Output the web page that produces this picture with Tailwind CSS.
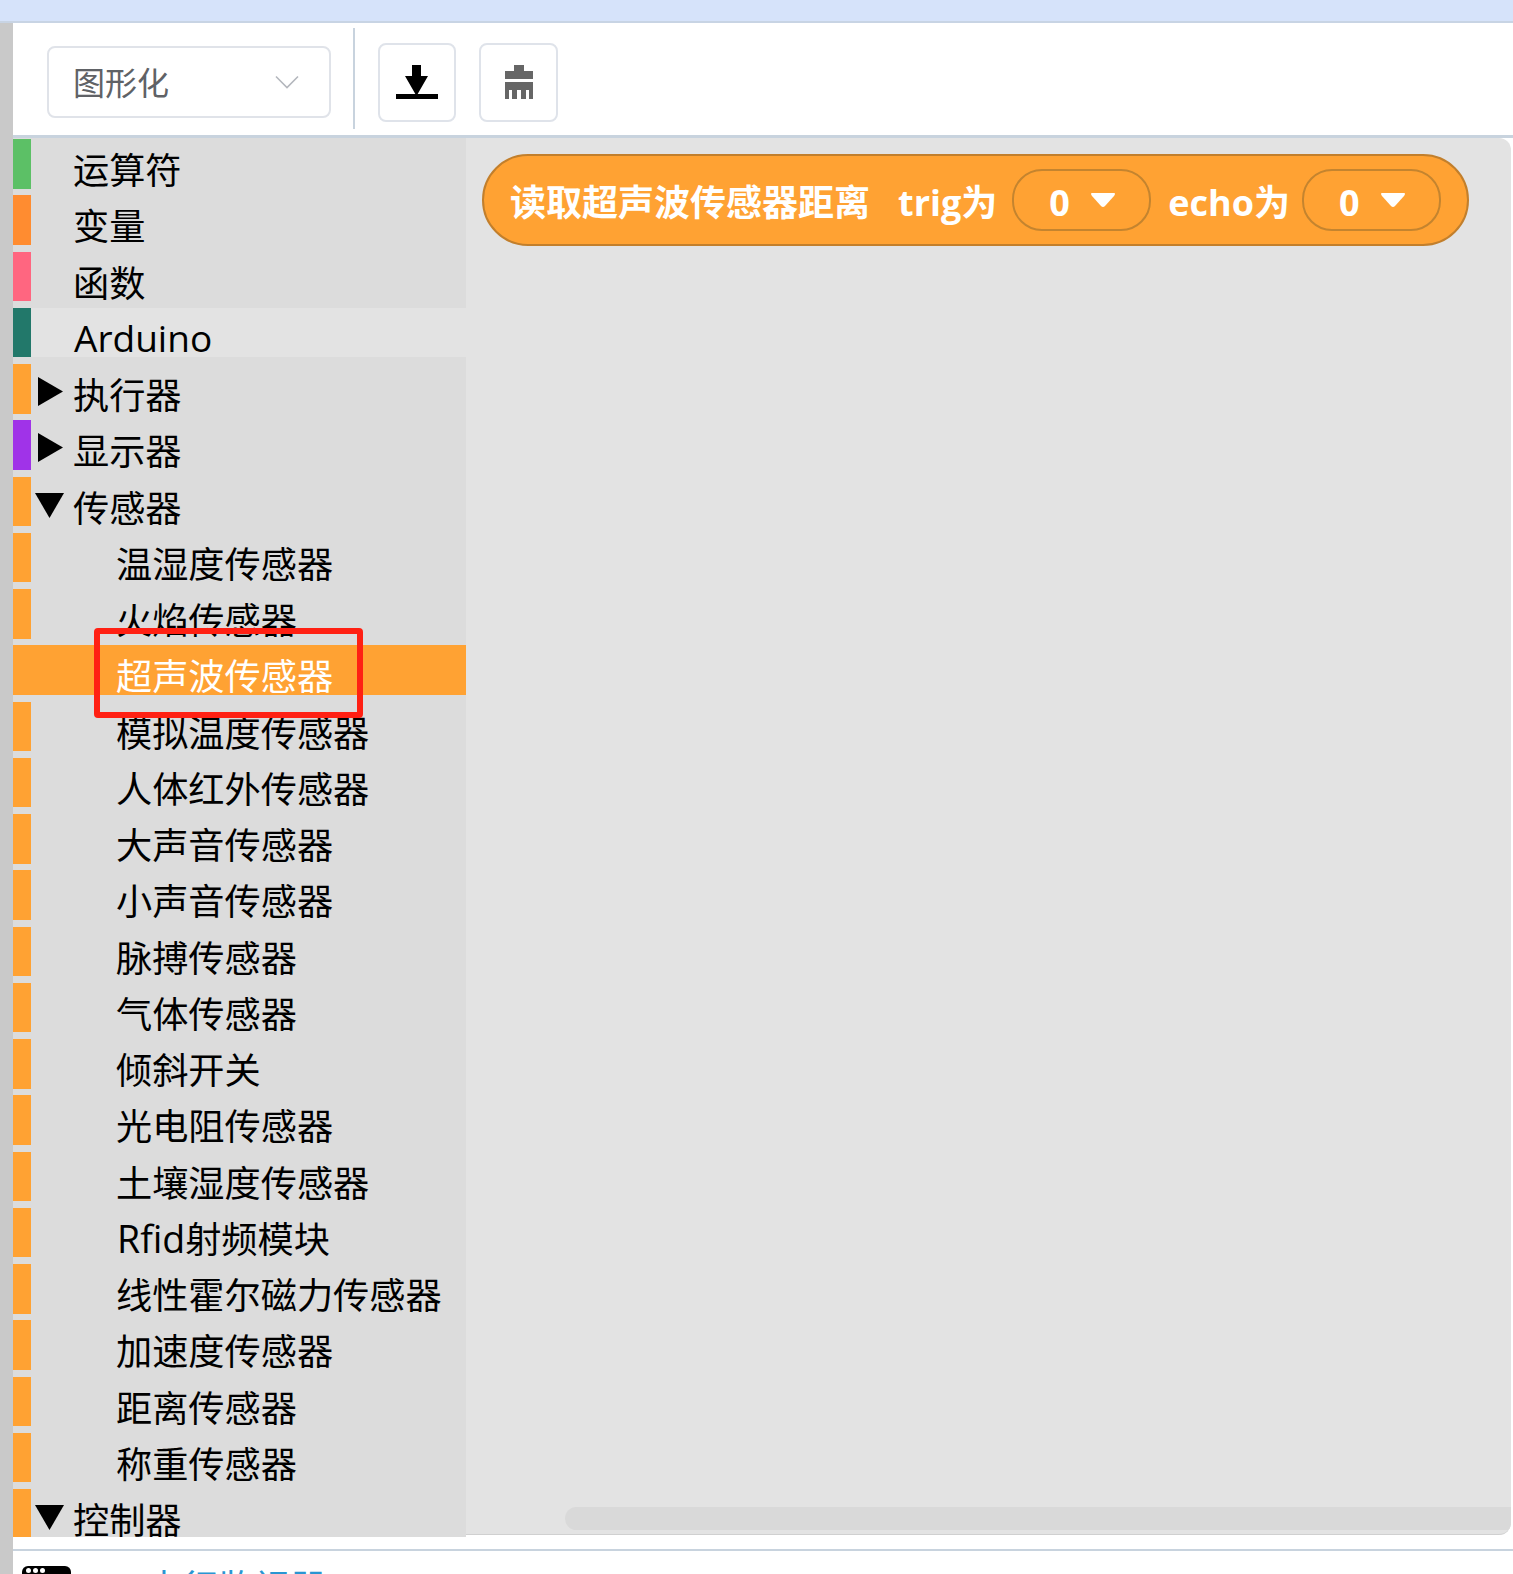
<!DOCTYPE html>
<html lang="zh-CN">
<head>
<meta charset="utf-8">
<script src="https://cdn.jsdelivr.net/npm/@tailwindcss/browser@4"></script>
</head>
<body class="bg-white font-['Open_Sans','Noto_Sans_CJK_SC',sans-serif]">
<div class="relative w-[1513px] h-[1574px] overflow-hidden flex flex-col">
  <div class="h-[23px] shrink-0 bg-[#d6e3fa] border-b-2 border-[#c8d4e4]"></div>
  <div class="flex flex-1 min-h-0">
    <div class="w-[13px] shrink-0 bg-[#c9c9c9]"></div>
    <div class="flex-1 min-w-0 flex flex-col">
      <!-- toolbar -->
      <div class="h-[115px] shrink-0 flex items-start border-b-[3px] border-[#c8d3de] bg-white">
        <div class="ml-[34px] mt-[23px] w-[284px] h-[72px] border-2 border-[#e0e3e9] rounded-lg flex items-center justify-between pl-[24px] pr-[30px]">
          <span class="mt-[2px] text-[32px] text-[#606266]">图形化</span>
          <svg class="w-[24px] h-[14px]" viewBox="0 0 24 14"><path d="M1 1.500 L12 12.500 L23 1.500" fill="none" stroke="#b4b7bd" stroke-width="1.6"/></svg>
        </div>
        <div class="ml-[22px] mt-[5px] w-[2px] h-[101px] bg-[#c8d3de]"></div>
        <div class="ml-[23px] mt-[20px] w-[78px] h-[79px] border-2 border-[#dfe3ea] rounded-lg flex items-center justify-center">
          <svg class="w-[42px] h-[36px]" viewBox="0 0 42 36"><path d="M16 0 H25 V11 H32 L20.500 31 L9 11 H16 Z" fill="#000"/><rect x="0" y="29" width="42" height="5" fill="#000"/></svg>
        </div>
        <div class="ml-[23px] mt-[20px] w-[79px] h-[79px] border-2 border-[#dfe3ea] rounded-lg flex items-center justify-center">
          <svg class="w-[30px] h-[35px]" viewBox="0 0 30 35"><path d="M10 0 H20 V6 H29 V14 H1 V6 H10 Z M1 17 H29 V34 H25 V25 H22 V34 H17 V25 H13 V34 H8 V25 H5 V34 H1 Z" fill="#666"/></svg>
        </div>
      </div>
      <!-- main -->
      <div class="h-[1399px] shrink-0 flex">
        <div class="w-[453px] shrink-0 h-full bg-[#dcdcdc] overflow-hidden pt-[1px] text-[36.2px] text-black leading-[62px]">
          <div class="h-[49.5px] mb-[6.75px] flex"><div class="w-[18px] shrink-0 bg-[#5cc066]"></div><span class="ml-[42px]">运算符</span></div>
          <div class="h-[49.5px] mb-[6.75px] flex"><div class="w-[18px] shrink-0 bg-[#ff8c30]"></div><span class="ml-[42px]">变量</span></div>
          <div class="h-[49.5px] mb-[6.75px] flex"><div class="w-[18px] shrink-0 bg-[#ff6680]"></div><span class="ml-[42px]">函数</span></div>
          <div class="h-[49.5px] mb-[6.75px] flex bg-[#e3e3e3]"><div class="w-[18px] shrink-0 bg-[#22786a]"></div><span class="ml-[43px] text-[37px] leading-[60px]">Arduino</span></div>
          <div class="h-[49.5px] mb-[6.75px] flex"><div class="w-[18px] shrink-0 bg-[#ffa233]"></div><svg class="ml-[7px] mt-[13px] w-[26px] h-[30px] shrink-0" viewBox="0 0 26 30"><path d="M0 0 L25 14.500 L0 29 Z" fill="#000"/></svg><span class="ml-[9px]">执行器</span></div>
          <div class="h-[49.5px] mb-[6.75px] flex"><div class="w-[18px] shrink-0 bg-[#a033e8]"></div><svg class="ml-[7px] mt-[13px] w-[26px] h-[30px] shrink-0" viewBox="0 0 26 30"><path d="M0 0 L25 14.500 L0 29 Z" fill="#000"/></svg><span class="ml-[9px]">显示器</span></div>
          <div class="h-[49.5px] mb-[6.75px] flex"><div class="w-[18px] shrink-0 bg-[#ffa233]"></div><svg class="ml-[4px] mt-[16px] w-[29px] h-[25px] shrink-0" viewBox="0 0 29 25"><path d="M0 0 H29 L14.500 25 Z" fill="#000"/></svg><span class="ml-[9px]">传感器</span></div>
          <div class="h-[49.5px] mb-[6.75px] flex"><div class="w-[18px] shrink-0 bg-[#ffa233]"></div><span class="ml-[85px]">温湿度传感器</span></div>
          <div class="h-[49.5px] mb-[6.75px] flex"><div class="w-[18px] shrink-0 bg-[#ffa233]"></div><span class="ml-[85px]">火焰传感器</span></div>
          <div class="h-[49.5px] mb-[6.75px] flex bg-[#ffa233] text-white"><div class="w-[18px] shrink-0 bg-[#ffa233]"></div><span class="ml-[85px]">超声波传感器</span></div>
          <div class="h-[49.5px] mb-[6.75px] flex"><div class="w-[18px] shrink-0 bg-[#ffa233]"></div><span class="ml-[85px]">模拟温度传感器</span></div>
          <div class="h-[49.5px] mb-[6.75px] flex"><div class="w-[18px] shrink-0 bg-[#ffa233]"></div><span class="ml-[85px]">人体红外传感器</span></div>
          <div class="h-[49.5px] mb-[6.75px] flex"><div class="w-[18px] shrink-0 bg-[#ffa233]"></div><span class="ml-[85px]">大声音传感器</span></div>
          <div class="h-[49.5px] mb-[6.75px] flex"><div class="w-[18px] shrink-0 bg-[#ffa233]"></div><span class="ml-[85px]">小声音传感器</span></div>
          <div class="h-[49.5px] mb-[6.75px] flex"><div class="w-[18px] shrink-0 bg-[#ffa233]"></div><span class="ml-[85px]">脉搏传感器</span></div>
          <div class="h-[49.5px] mb-[6.75px] flex"><div class="w-[18px] shrink-0 bg-[#ffa233]"></div><span class="ml-[85px]">气体传感器</span></div>
          <div class="h-[49.5px] mb-[6.75px] flex"><div class="w-[18px] shrink-0 bg-[#ffa233]"></div><span class="ml-[85px]">倾斜开关</span></div>
          <div class="h-[49.5px] mb-[6.75px] flex"><div class="w-[18px] shrink-0 bg-[#ffa233]"></div><span class="ml-[85px]">光电阻传感器</span></div>
          <div class="h-[49.5px] mb-[6.75px] flex"><div class="w-[18px] shrink-0 bg-[#ffa233]"></div><span class="ml-[85px]">土壤湿度传感器</span></div>
          <div class="h-[49.5px] mb-[6.75px] flex"><div class="w-[18px] shrink-0 bg-[#ffa233]"></div><span class="ml-[86px]"><span class="text-[37.5px]">Rfid</span>射频模块</span></div>
          <div class="h-[49.5px] mb-[6.75px] flex"><div class="w-[18px] shrink-0 bg-[#ffa233]"></div><span class="ml-[85px]">线性霍尔磁力传感器</span></div>
          <div class="h-[49.5px] mb-[6.75px] flex"><div class="w-[18px] shrink-0 bg-[#ffa233]"></div><span class="ml-[85px]">加速度传感器</span></div>
          <div class="h-[49.5px] mb-[6.75px] flex"><div class="w-[18px] shrink-0 bg-[#ffa233]"></div><span class="ml-[85px]">距离传感器</span></div>
          <div class="h-[49.5px] mb-[6.75px] flex"><div class="w-[18px] shrink-0 bg-[#ffa233]"></div><span class="ml-[85px]">称重传感器</span></div>
          <div class="h-[49.5px] mb-[6.75px] flex"><div class="w-[18px] shrink-0 bg-[#ffa233]"></div><svg class="ml-[4px] mt-[16px] w-[29px] h-[25px] shrink-0" viewBox="0 0 29 25"><path d="M0 0 H29 L14.500 25 Z" fill="#000"/></svg><span class="ml-[9px]">控制器</span></div>
        </div>
        <!-- workspace -->
        <div class="w-[1045px] shrink-0 h-[1397px] bg-[#e3e3e3] rounded-tr-xl rounded-br-xl border-b border-[#d0d0d0] relative overflow-hidden pt-[16px] pl-[16px] font-bold text-white">
          <div class="w-[987px] h-[92px] rounded-[46px] bg-[#ffa233] border-2 border-[#c27f2c] flex items-center pl-[26px] text-[36px]">
            <span class="mt-[6px] whitespace-nowrap">读取超声波传感器距离</span>
            <span class="mt-[6px] ml-[28px] whitespace-nowrap">trig为</span>
            <div class="ml-[15px] w-[139px] h-[62px] rounded-[30px] border-2 border-[#c4842f] flex items-center pl-[35px] gap-[20px] shrink-0">
              <span class="mt-[6px]">0</span>
              <svg class="w-[26px] h-[16px] mb-[1px]" viewBox="0 0 26 16"><path d="M2 1 H24 Q26 1 24 4 L15 14 Q13 16 11 14 L2 4 Q0 1 2 1 Z" fill="#fff"/></svg>
            </div>
            <span class="mt-[6px] ml-[17px] whitespace-nowrap">echo为</span>
            <div class="ml-[12px] w-[139px] h-[62px] rounded-[30px] border-2 border-[#c4842f] flex items-center pl-[35px] gap-[20px] shrink-0">
              <span class="mt-[6px]">0</span>
              <svg class="w-[26px] h-[16px] mb-[1px]" viewBox="0 0 26 16"><path d="M2 1 H24 Q26 1 24 4 L15 14 Q13 16 11 14 L2 4 Q0 1 2 1 Z" fill="#fff"/></svg>
            </div>
          </div>
          <div class="absolute left-[99px] right-0 bottom-[4px] h-[23px] rounded-l-xl bg-[#d9d9d9]"></div>
        </div>
      </div>
      <div class="h-[12px] shrink-0 bg-white"></div>
      <div class="h-[2px] shrink-0 bg-[#c8d3de]"></div>
      <div class="flex-1 min-h-0 flex items-start pl-[9px] pt-[15px]">
        <div class="w-[49px] h-[40px] bg-black rounded-t-md flex gap-[2px] pl-[4px] pt-[2px] shrink-0">
          <span class="w-[5px] h-[5px] rounded-full bg-white"></span><span class="w-[5px] h-[5px] rounded-full bg-white"></span><span class="w-[5px] h-[5px] rounded-full bg-white"></span>
        </div>
        <span class="ml-[75px] -mt-[3px] text-[36px] leading-[50px] text-[#2a96d2]">串行监视器</span>
      </div>
    </div>
  </div>
  <div class="absolute left-[94px] top-[628px] w-[269px] h-[90px] border-[6px] border-[#ff2013] rounded-[4px]"></div>
</div>
</body>
</html>
